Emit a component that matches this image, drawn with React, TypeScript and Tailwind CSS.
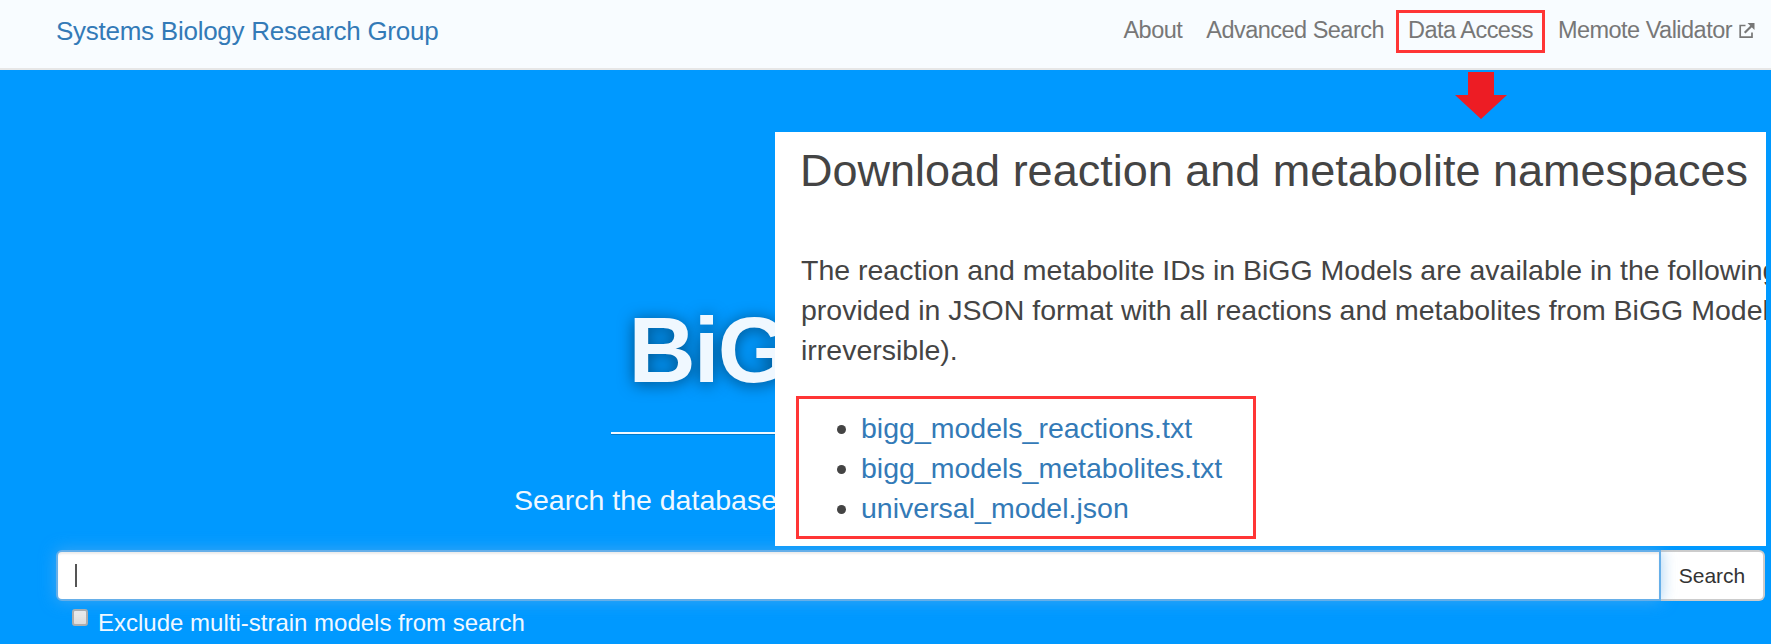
const files = [
  "bigg_models_reactions.txt",
  "bigg_models_metabolites.txt",
  "universal_model.json",
];

function ExternalIcon() {
  return (
    <svg width="16" height="16" viewBox="0 0 16 16" fill="none" stroke="#777777" className="ml-[7px] mt-[2px] shrink-0">
      <path d="M6.5 2.5H1.2V14.2H13V9.5" strokeWidth="1.7" />
      <path d="M5.7 9.8L12.8 2.7" strokeWidth="2.2" />
      <path d="M8.5 0H15.5V7Z" fill="#777777" stroke="none" />
    </svg>
  );
}

function Header() {
  return (
    <header className="flex h-[70px] items-start justify-between border-b-2 border-[#e7e7e7] bg-[#f8fcff] pl-[56px] pr-[16px]">
      <a className="mt-[15px] text-[26px] leading-[32px] tracking-[-0.26px] text-[#337ab7]">Systems Biology Research Group</a>
      <nav className="flex pt-[14px] text-[23.5px] leading-[32px] tracking-[-0.52px] text-[#777777]">
        <a className="mr-[24px]">About</a>
        <a className="mr-[24px]">Advanced Search</a>
        <a className="relative mr-[25px]">
          Data Access
          <span className="absolute left-[-12px] top-[-4px] h-[43px] w-[149px] border-[3px] border-[#ff3535]" />
        </a>
        <a className="flex items-center">
          Memote Validator
          <ExternalIcon />
        </a>
      </nav>
    </header>
  );
}

function DownloadPanel() {
  return (
    <section className="absolute left-[775px] top-[132px] z-20 h-[414px] w-[991px] overflow-hidden whitespace-nowrap bg-white pl-[26px] text-[28.5px] leading-[40px] text-[#444444]">
      <h2 className="-ml-px mt-[14px] text-[45px] leading-[50px]">Download reaction and metabolite namespaces</h2>
      <p className="mt-[54px]">
        The reaction and metabolite IDs in BiGG Models are available in the following
        <br />
        provided in JSON format with all reactions and metabolites from BiGG Models
        <br />
        irreversible).
      </p>
      <div className="-ml-[5px] mt-[26px] h-[143px] w-[460px] border-[3px] border-[#ff3535] pt-[9px]">
        <ul>
          {files.map((file) => (
            <li key={file} className="flex items-center pl-[38px]">
              <span className="mr-[15px] mt-[3px] size-[9px] rounded-full bg-[#444444]" />
              <a className="text-[#337ab7]">{file}</a>
            </li>
          ))}
        </ul>
      </div>
    </section>
  );
}

export default function App() {
  return (
    <div className="relative flex h-[644px] w-[1771px] flex-col overflow-hidden bg-[#0099ff] font-['Liberation_Sans',Arial,sans-serif]">
      <Header />
      <main className="flex flex-col pl-[56px] pr-[6px] text-[#f0f8ff]">
        <h1 className="mt-[230px] text-center text-[93px] font-bold leading-[100px] tracking-[-1.8px] [text-shadow:0_2px_16px_rgba(0,0,0,0.5)]">BiGG Models</h1>
        <div className="mx-auto mt-[32px] h-[3px] w-[600px] border-b border-[#007acc] bg-[#f0f8ff]" />
        <p className="mt-[45px] pl-[458px] text-[28.5px] leading-[40px]">Search the database</p>
        <form className="mt-[30px] flex h-[51px]">
          <div className="relative z-10 flex flex-1 items-center rounded-l-[6px] border-2 border-[#66afe9] bg-white pl-[17px] shadow-[inset_0_2px_2px_rgba(0,0,0,0.075),0_0_16px_rgba(102,175,233,0.6)]">
            <span className="h-[23px] w-[2px] bg-[#555555]" />
          </div>
          <button type="button" className="w-[104px] rounded-r-[6px] border-2 border-l-0 border-[#cccccc] bg-white text-[21px] text-[#333333]">Search</button>
        </form>
        <label className="flex items-start pl-[16px] pt-[8px] text-[24px] leading-[28px]">
          <span className="h-[17px] w-[16px] rounded-[3px] border-2 border-[#adadad] bg-gradient-to-b from-[#eeeeee] to-[#dcdcdc]" />
          <span className="ml-[10px]">Exclude multi-strain models from search</span>
        </label>
      </main>
      <svg className="absolute left-[1455px] top-[72px]" width="52" height="48" viewBox="0 0 52 48">
        <path d="M13 0H39V23H52L26 47L0 23H13Z" fill="#ed1c24" />
      </svg>
      <DownloadPanel />
    </div>
  );
}
